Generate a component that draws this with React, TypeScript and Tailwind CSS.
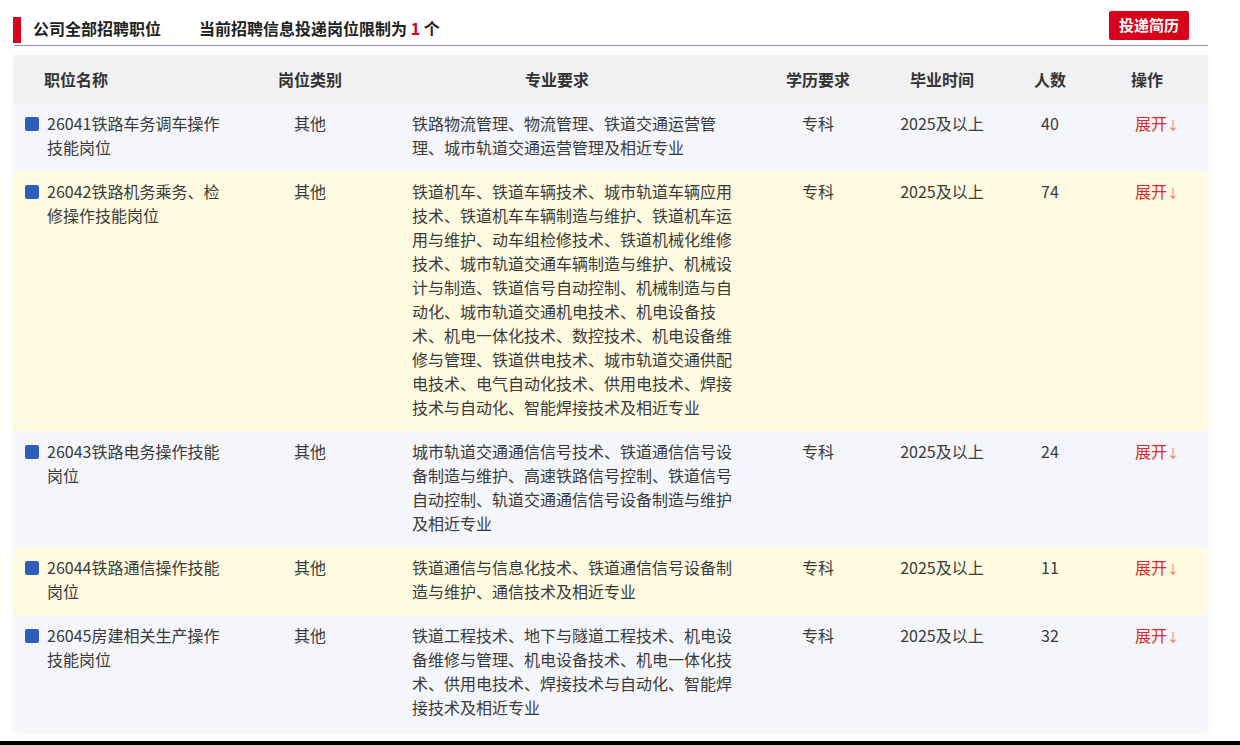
type Job = {
  name: string;
  category: string;
  major: string;
  degree: string;
  grad: string;
  count: number;
};

const jobs: Job[] = [
  {
    name: "26041铁路车务调车操作技能岗位",
    category: "其他",
    major: "铁路物流管理、物流管理、铁道交通运营管理、城市轨道交通运营管理及相近专业",
    degree: "专科",
    grad: "2025及以上",
    count: 40,
  },
  {
    name: "26042铁路机务乘务、检修操作技能岗位",
    category: "其他",
    major:
      "铁道机车、铁道车辆技术、城市轨道车辆应用技术、铁道机车车辆制造与维护、铁道机车运用与维护、动车组检修技术、铁道机械化维修技术、城市轨道交通车辆制造与维护、机械设计与制造、铁道信号自动控制、机械制造与自动化、城市轨道交通机电技术、机电设备技术、机电一体化技术、数控技术、机电设备维修与管理、铁道供电技术、城市轨道交通供配电技术、电气自动化技术、供用电技术、焊接技术与自动化、智能焊接技术及相近专业",
    degree: "专科",
    grad: "2025及以上",
    count: 74,
  },
  {
    name: "26043铁路电务操作技能岗位",
    category: "其他",
    major:
      "城市轨道交通通信信号技术、铁道通信信号设备制造与维护、高速铁路信号控制、铁道信号自动控制、轨道交通通信信号设备制造与维护及相近专业",
    degree: "专科",
    grad: "2025及以上",
    count: 24,
  },
  {
    name: "26044铁路通信操作技能岗位",
    category: "其他",
    major: "铁道通信与信息化技术、铁道通信信号设备制造与维护、通信技术及相近专业",
    degree: "专科",
    grad: "2025及以上",
    count: 11,
  },
  {
    name: "26045房建相关生产操作技能岗位",
    category: "其他",
    major:
      "铁道工程技术、地下与隧道工程技术、机电设备维修与管理、机电设备技术、机电一体化技术、供用电技术、焊接技术与自动化、智能焊接技术及相近专业",
    degree: "专科",
    grad: "2025及以上",
    count: 32,
  },
];

const cols = "grid grid-cols-[236px_120px_374px_148px_100px_116px_84px]";

function JobRow({ job, striped }: { job: Job; striped: boolean }) {
  return (
    <div
      className={`${cols} pt-[8px] pb-[12px] text-[16px] leading-[24px] text-[#3a3a3a] ${
        striped ? "bg-[#fffbe0]" : "bg-[#f5f6fb]"
      }`}
    >
      <div className="flex gap-[8px] pl-[11px]">
        <span className="mt-[6px] h-[14px] w-[14px] shrink-0 rounded-[2px] bg-[#2d5fb9]" />
        <span className="w-[180px]">{job.name}</span>
      </div>
      <div className="text-center">{job.category}</div>
      <div className="pl-[42px]">
        <p className="w-[324px]">{job.major}</p>
      </div>
      <div className="text-center">{job.degree}</div>
      <div className="text-center">{job.grad}</div>
      <div className="text-center">{job.count}</div>
      <div className="pl-[27px] text-[#dc2a2a]">
        展开<span className="text-[12px] text-[#e46a6a]">↓</span>
      </div>
    </div>
  );
}

export default function App() {
  return (
    <div
      className="flex h-[745px] flex-col overflow-hidden bg-white"
      style={{ fontFamily: '"Noto Sans CJK SC", "Noto Sans", sans-serif' }}
    >
      <div className="flex-1 overflow-hidden pl-[14px] pr-[32px] pt-[11px]">
        <div className="flex h-[35px] items-start justify-between border-b border-[#8e94b7] pr-[19px]">
          <div className="mt-[3px] flex h-[28px] items-center">
            <span className="-ml-[1px] mt-[4px] h-[26px] w-[8px] bg-[#d9001b]" />
            <h1 className="ml-[12px] text-[16px] font-bold text-[#222]">公司全部招聘职位</h1>
            <p className="ml-[38px] text-[16px] font-bold text-[#222]">
              当前招聘信息投递岗位限制为 <span className="text-[#d9001b]">1</span> 个
            </p>
          </div>
          <button className="h-[29px] rounded-[2px] bg-[#d9001b] px-[10px] text-[15px] font-bold text-white">
            投递简历
          </button>
        </div>

        <div className="mt-[9px] shadow-[0_2px_6px_rgba(0,0,0,0.06)]">
          <div className={`${cols} h-[48px] items-center bg-[#f1f1f3] text-[16px] font-bold text-[#333]`}>
            <div className="pl-[30px]">职位名称</div>
            <div className="text-center">岗位类别</div>
            <div className="text-center">专业要求</div>
            <div className="text-center">学历要求</div>
            <div className="text-center">毕业时间</div>
            <div className="text-center">人数</div>
            <div className="pl-[23px]">操作</div>
          </div>
          {jobs.map((job, i) => (
            <JobRow key={job.name} job={job} striped={i % 2 === 1} />
          ))}
        </div>
      </div>
      <div className="h-[4px] shrink-0 bg-black" />
    </div>
  );
}
